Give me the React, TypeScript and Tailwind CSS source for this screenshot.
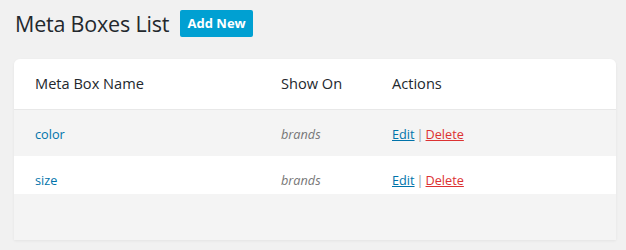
const rows = [
  { name: 'color', showOn: 'brands', bg: 'bg-[#f4f4f4]', h: 'h-[47px]' },
  { name: 'size', showOn: 'brands', bg: 'bg-white', h: 'h-[38px]' },
];

export default function App() {
  return (
    <div className="min-h-[250px] bg-[#f1f1f1] font-['Open_Sans',sans-serif] text-[#23282d]">
      <div className="flex items-center px-[15px] pt-[10px]">
        <h1 className="text-[21.5px] leading-[27px] font-normal tracking-[-0.2px]">Meta Boxes List</h1>
        <button className="ml-[11px] h-[27px] w-[73px] rounded-[2px] bg-[#00a0d2] text-[13px] font-bold text-white">
          Add New
        </button>
      </div>

      <div className="mx-[14px] mt-[22px] w-[602px] overflow-hidden rounded-t-[6px] bg-[#f4f4f4] shadow-[0_1px_3px_rgba(0,0,0,0.06)]">
        <table className="w-full table-fixed border-collapse text-left">
          <thead>
            <tr className="h-[50px] border-b border-[#e8e8e8] bg-white text-[14.6px]">
              <th className="w-[267px] pl-[21px] font-normal">Meta Box Name</th>
              <th className="w-[111px] font-normal">Show On</th>
              <th className="font-normal">Actions</th>
            </tr>
          </thead>
          <tbody className="text-[12.7px]">
            {rows.map((row) => (
              <tr key={row.name} className={`${row.bg} ${row.h}`}>
                <td className="pl-[21px] align-top pt-[15px] text-[#0073aa]">{row.name}</td>
                <td className="align-top pt-[15px] italic text-[#777]">{row.showOn}</td>
                <td className="align-top pt-[15px] text-[#999]">
                  <a href="#" className="text-[#0073aa] underline">Edit</a>
                  <span className="mx-[2px]">|</span>
                  <a href="#" className="text-[#dc3232] underline">Delete</a>
                </td>
              </tr>
            ))}
          </tbody>
        </table>
        <div className="h-[46px]" />
      </div>
    </div>
  );
}
